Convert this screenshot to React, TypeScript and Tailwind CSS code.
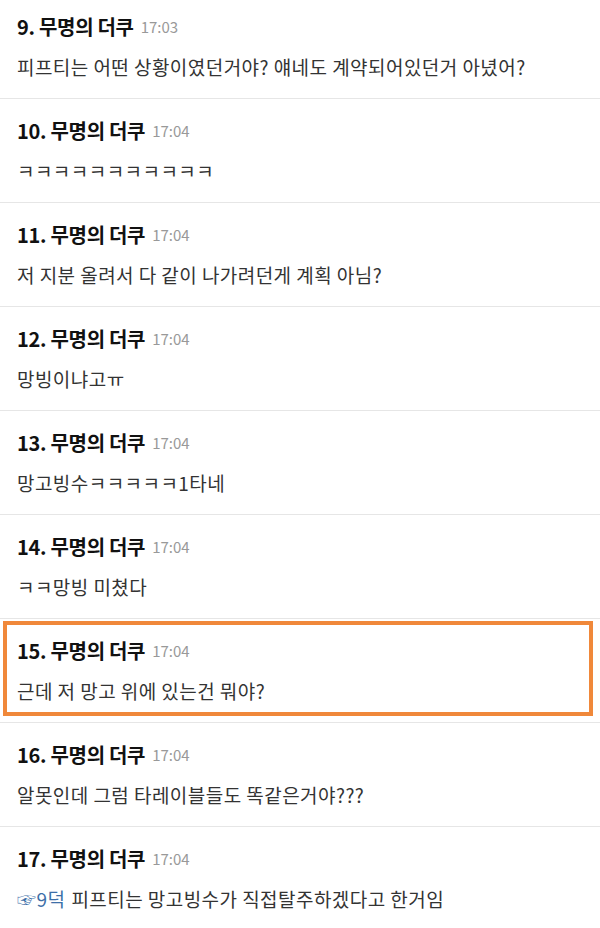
const COMMENTS: { no: number; time: string; body: string; ref?: string }[] = [
  { no: 9, time: "17:03", body: "피프티는 어떤 상황이였던거야? 얘네도 계약되어있던거 아녔어?" },
  { no: 10, time: "17:04", body: "ㅋㅋㅋㅋㅋㅋㅋㅋㅋㅋㅋ" },
  { no: 11, time: "17:04", body: "저 지분 올려서 다 같이 나가려던게 계획 아님?" },
  { no: 12, time: "17:04", body: "망빙이냐고ㅠ" },
  { no: 13, time: "17:04", body: "망고빙수ㅋㅋㅋㅋㅋ1타네" },
  { no: 14, time: "17:04", body: "ㅋㅋ망빙 미쳤다" },
  { no: 15, time: "17:04", body: "근데 저 망고 위에 있는건 뭐야?" },
  { no: 16, time: "17:04", body: "알못인데 그럼 타레이블들도 똑같은거야???" },
  { no: 17, time: "17:04", ref: "☞9덕", body: "피프티는 망고빙수가 직접탈주하겠다고 한거임" },
];

export default function App() {
  return (
    <main
      className="w-[600px] h-[928px] bg-white overflow-hidden"
      style={{ fontFamily: '"Noto Sans CJK KR", "Noto Sans", sans-serif' }}
    >
      <div className="-mt-[5px] flex flex-col">
        {COMMENTS.map((c) => (
          <div
            key={c.no}
            className="relative h-[104px] border-b border-[#e6e6e6] pl-[17px] pt-[20px] flex flex-col"
          >
            <div className="h-[24px] flex items-center gap-[7px] leading-[24px]">
              <span className="text-[20px] font-bold text-[#111] tracking-[-0.3px]">
                {c.no}. 무명의 더쿠
              </span>
              <span className="text-[15px] text-[#999]">{c.time}</span>
            </div>
            <div className="mt-[14px] h-[28px] leading-[28px] text-[19px] tracking-[0.45px] text-[#333]">
              {c.ref && <span className="text-[#3d6fa8] mr-[6px]">{c.ref}</span>}
              {c.body}
            </div>
            {c.no === 15 && (
              <div className="absolute left-[3px] right-[7px] top-[2px] bottom-[6px] border-4 border-[#f0883a] pointer-events-none" />
            )}
          </div>
        ))}
      </div>
    </main>
  );
}
